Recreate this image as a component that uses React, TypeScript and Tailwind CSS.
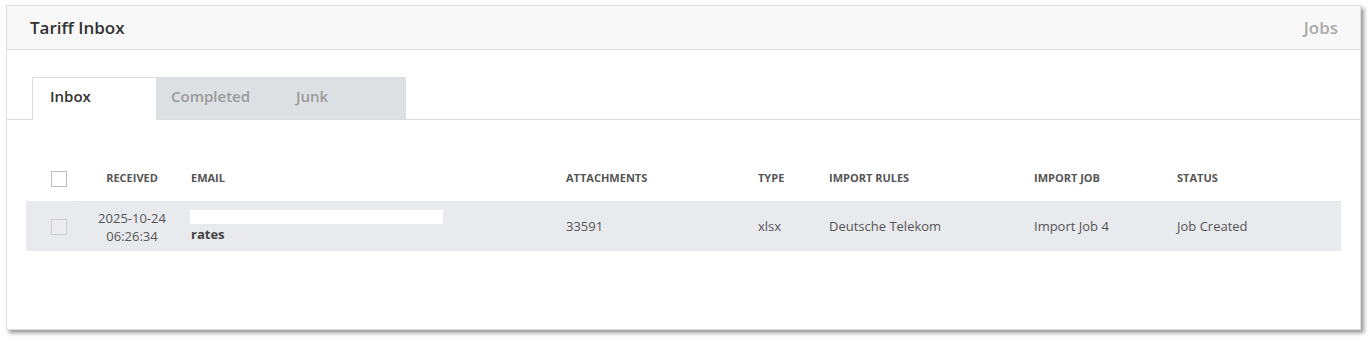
import React from "react";

const font = { fontFamily: '"Open Sans", "Noto Sans", sans-serif' };

const cols = [
  { key: "cb", w: "w-[53px]" },
  { key: "RECEIVED", w: "w-[106px]" },
  { key: "EMAIL", w: "w-[375px]" },
  { key: "ATTACHMENTS", w: "w-[192px]" },
  { key: "TYPE", w: "w-[71px]" },
  { key: "IMPORT RULES", w: "w-[205px]" },
  { key: "IMPORT JOB", w: "w-[143px]" },
  { key: "STATUS", w: "w-[170px]" },
];

export default function App() {
  return (
    <div className="min-h-[342px] bg-white pt-[5px] pl-[6px]" style={font}>
      <div className="w-[1355px] h-[325px] bg-white border border-[#dedede] shadow-[3px_3px_4px_rgba(0,0,0,0.4)]">
        {/* header */}
        <div className="h-[44px] bg-[#f8f8f8] border-b border-[#dcdcdc] flex items-center justify-between pl-[23px] pr-[22px]">
          <h1 className="text-[17px] font-semibold text-[#333]">Tariff Inbox</h1>
          <span className="text-[17px] font-semibold text-[#aaa]">Jobs</span>
        </div>

        {/* tabs */}
        <div className="mt-[27px] flex border-b border-[#dcdcdc] pl-[25px]">
          <div className="w-[124px] h-[43px] -mb-px bg-white border-l border-t border-[#dcdcdc] pl-[17px] pb-[5px] flex items-center text-[15px] font-semibold text-[#333]">
            Inbox
          </div>
          <div className="flex bg-[#dde0e3] h-[42px]">
            <div className="w-[125px] pl-[15px] pb-[4px] flex items-center text-[15px] font-semibold text-[#9a9a9a]">Completed</div>
            <div className="w-[125px] pl-[15px] pb-[4px] flex items-center text-[15px] font-semibold text-[#9a9a9a]">Junk</div>
          </div>
        </div>

        {/* table */}
        <div className="px-[19px] pt-[38px]">
          <table className="w-[1315px] table-fixed border-collapse">
            <thead>
              <tr className="h-[43px]">
                {cols.map((c) =>
                  c.key === "cb" ? (
                    <th key={c.key} className={`${c.w} pl-[25px] pb-[1px] text-left align-middle`}>
                      <div className="w-[16px] h-[16px] border border-[#bdbdbd] bg-white" />
                    </th>
                  ) : (
                    <th
                      key={c.key}
                      className={`${c.w} px-[6px] pb-[3px] text-[11px] font-bold text-[#555] ${c.key === "RECEIVED" ? "text-center" : "text-left"}`}
                    >
                      {c.key}
                    </th>
                  )
                )}
              </tr>
            </thead>
            <tbody>
              <tr className="bg-[#e9eaee] h-[50px] text-[13px] text-[#555]">
                <td className="pl-[25px] pt-[1px] align-middle">
                  <div className="w-[16px] h-[16px] border border-[#cfcfcf] bg-[#ececee]" />
                </td>
                <td className="px-[6px] pt-[1px] text-center leading-[18px] border-t border-[#dfe1e5]">
                  2025-10-24
                  <br />
                  06:26:34
                </td>
                <td className="px-[5px] pt-[1px] border-t border-[#dfe1e5]">
                  <div className="w-[253px] h-[14px] bg-white" />
                  <div className="font-bold text-[#444] leading-[18px] pl-px pt-[1px]">rates</div>
                </td>
                <td className="px-[6px] pt-[1px] border-t border-[#dfe1e5]">33591</td>
                <td className="px-[6px] pt-[1px] border-t border-[#dfe1e5]">xlsx</td>
                <td className="px-[6px] pt-[1px] border-t border-[#dfe1e5]">Deutsche Telekom</td>
                <td className="px-[6px] pt-[1px] border-t border-[#dfe1e5]">Import Job 4</td>
                <td className="px-[6px] pt-[1px] border-t border-[#dfe1e5]">Job Created</td>
              </tr>
            </tbody>
          </table>
        </div>
      </div>
    </div>
  );
}
